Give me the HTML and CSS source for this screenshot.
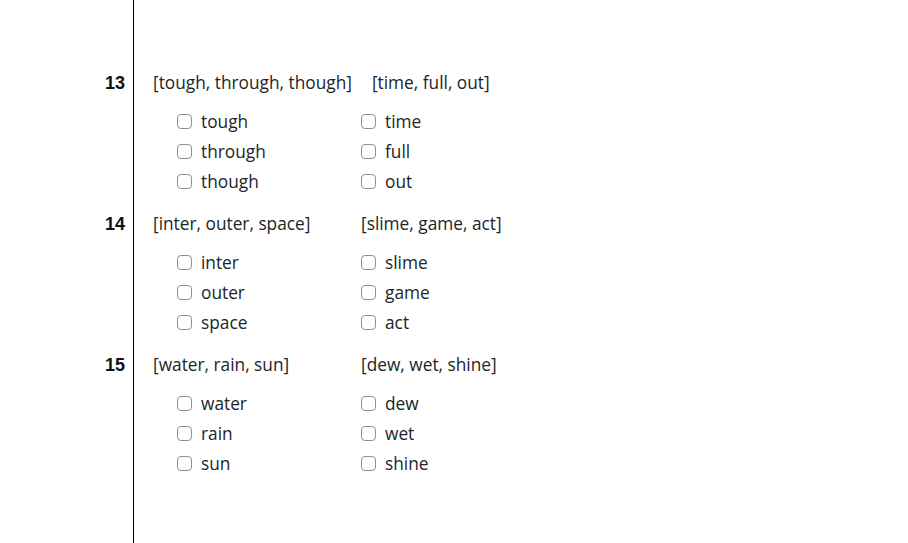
FILE: index.html
```html
<!DOCTYPE html>
<html lang="en">
<head>
<meta charset="utf-8">
<title>Word groups</title>
<link rel="stylesheet" href="styles.css">
</head>
<body>
<div class="sheet">
  <div class="question">
    <div class="num">13</div>
    <div class="body">
      <div class="heads"><span class="head">[tough, through, though]</span><span class="head">[time, full, out]</span></div>
      <div class="opts">
        <label class="opt"><input type="checkbox"><span>tough</span></label>
        <label class="opt"><input type="checkbox"><span>time</span></label>
        <label class="opt"><input type="checkbox"><span>through</span></label>
        <label class="opt"><input type="checkbox"><span>full</span></label>
        <label class="opt"><input type="checkbox"><span>though</span></label>
        <label class="opt"><input type="checkbox"><span>out</span></label>
      </div>
    </div>
  </div>
  <div class="question">
    <div class="num">14</div>
    <div class="body">
      <div class="heads"><span class="head">[inter, outer, space]</span><span class="head">[slime, game, act]</span></div>
      <div class="opts">
        <label class="opt"><input type="checkbox"><span>inter</span></label>
        <label class="opt"><input type="checkbox"><span>slime</span></label>
        <label class="opt"><input type="checkbox"><span>outer</span></label>
        <label class="opt"><input type="checkbox"><span>game</span></label>
        <label class="opt"><input type="checkbox"><span>space</span></label>
        <label class="opt"><input type="checkbox"><span>act</span></label>
      </div>
    </div>
  </div>
  <div class="question">
    <div class="num">15</div>
    <div class="body">
      <div class="heads"><span class="head">[water, rain, sun]</span><span class="head">[dew, wet, shine]</span></div>
      <div class="opts">
        <label class="opt"><input type="checkbox"><span>water</span></label>
        <label class="opt"><input type="checkbox"><span>dew</span></label>
        <label class="opt"><input type="checkbox"><span>rain</span></label>
        <label class="opt"><input type="checkbox"><span>wet</span></label>
        <label class="opt"><input type="checkbox"><span>sun</span></label>
        <label class="opt"><input type="checkbox"><span>shine</span></label>
      </div>
    </div>
  </div>
  <div class="tail"></div>
</div>
</body>
</html>
```
FILE: styles.css
```css
html, body {
  margin: 0;
  padding: 0;
  background: #fff;
}
body {
  font-family: "Open Sans", "Noto Sans", sans-serif;
  font-size: 17.3px;
  color: #212529;
}
.sheet {
  display: flex;
  flex-direction: column;
  min-height: 100vh;
}
.question {
  display: grid;
  grid-template-columns: 133px 1fr;
}
.question:first-child .body {
  padding-top: 71px;
}
.question:first-child .num {
  padding-top: 71px;
}
.num {
  font-family: "Liberation Sans", Arial, sans-serif;
  font-weight: bold;
  font-size: 18px;
  line-height: 24px;
  text-align: right;
  padding-right: 8px;
  color: #111;
}
.body {
  border-left: 1px solid #000;
  padding-left: 19px;
  padding-bottom: 16px;
}
.heads {
  display: flex;
  line-height: 24px;
}
.head:first-child {
  min-width: 188px;
  margin-right: 20px;
}
.opts {
  display: grid;
  grid-template-columns: 184px auto;
  padding-left: 24px;
  margin-top: 11px;
}
.opt {
  display: flex;
  align-items: center;
  gap: 9px;
  height: 30px;
}
.opt input {
  appearance: none;
  -webkit-appearance: none;
  margin: 0;
  width: 15px;
  height: 15px;
  border: 1px solid #8f8f8f;
  border-radius: 4px;
  background: #fff;
  box-sizing: border-box;
}
.tail {
  flex: 1;
  margin-left: 133px;
  border-left: 1px solid #000;
}
```
